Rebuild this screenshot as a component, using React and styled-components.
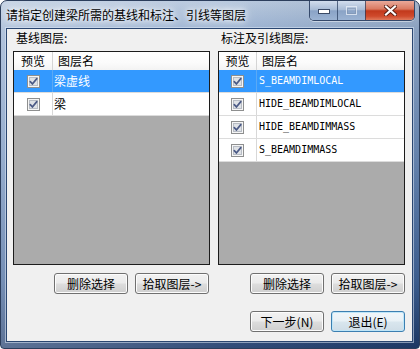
import React from "react";
import styled, { createGlobalStyle } from "styled-components";

const Global = createGlobalStyle`
  html, body { margin: 0; padding: 0; background: #fff; }
  body { font-family: "Noto Sans CJK SC", "Noto Sans", sans-serif; }
`;

const CJK = `"Noto Sans CJK SC", "Noto Sans", sans-serif`;

const Window = styled.div`
  width: 420px;
  height: 349px;
  box-sizing: border-box;
  border: 1px solid #2c3e5c;
  border-radius: 7px 7px 4px 4px;
  overflow: hidden;
  display: flex;
  flex-direction: column;
  background:
    linear-gradient(90deg, rgba(255,255,255,0.28) 0%, rgba(255,255,255,0.08) 55%, rgba(0,0,0,0.08) 100%),
    linear-gradient(180deg, #b3c5dc 0%, #93acce 9%, #6d8dba 45%, #41659a 80%, #1f3c6c 100%);
`;

const TitleBar = styled.div`
  height: 28px;
  display: flex;
  align-items: flex-start;
  padding: 0 4px 0 5px;
`;

const Title = styled.div`
  flex: 1;
  padding-top: 6px;
  font: 12px/16px ${CJK};
  color: #000;
  text-shadow: 0 0 5px #fff, 0 0 9px rgba(255,255,255,0.9), 0 0 14px rgba(255,255,255,0.7);
  white-space: nowrap;
`;

const CaptionGroup = styled.div`
  display: flex;
  height: 19px;
  border: 1px solid rgba(35, 55, 90, 0.85);
  border-top: none;
  border-radius: 0 0 5px 5px;
  overflow: hidden;
  box-shadow: 0 1px 0 rgba(255,255,255,0.45), inset 0 0 0 1px rgba(255,255,255,0.35);
`;

const CaptionButton = styled.div`
  width: ${(p) => p.$w}px;
  display: flex;
  align-items: center;
  justify-content: center;
  border-left: ${(p) => (p.$first ? "none" : "1px solid rgba(35,55,90,0.7)")};
  background: ${(p) =>
    p.$close
      ? "linear-gradient(180deg, #e9a99a 0%, #d97a62 42%, #c2391c 52%, #cf4a2c 80%, #e07a5c 100%)"
      : "linear-gradient(180deg, #d2dded 0%, #a9bcd6 45%, #8aa3c6 52%, #9bb3d3 100%)"};
`;

const Client = styled.div`
  flex: 1;
  margin: 0 6px 6px 5px;
  border: 1px solid #2a4670;
  box-shadow: 0 0 0 1px rgba(220, 232, 246, 0.55);
  background: #f0f0f0;
  padding: 1px 7px 9px 6px;
  display: flex;
  flex-direction: column;
`;

const Columns = styled.div`
  display: grid;
  grid-template-columns: 197px 187px;
  column-gap: 8px;
`;

const Column = styled.div`
  display: flex;
  flex-direction: column;
`;

const GroupLabel = styled.div`
  height: 16px;
  margin: 0 0 5px 3px;
  font: 12px/16px ${CJK};
  color: #000;
`;

const ListBox = styled.div`
  height: 214px;
  box-sizing: border-box;
  border: 1px solid #1c1c1c;
  background: #ababab;
  display: flex;
  flex-direction: column;
  overflow: hidden;
`;

const HeaderRow = styled.div`
  height: 18px;
  display: flex;
  background: linear-gradient(180deg, #ffffff 0%, #fbfbfb 60%, #f3f3f3 100%);
`;

const HeaderCell = styled.div`
  width: ${(p) => (p.$w ? `${p.$w}px` : "auto")};
  flex: ${(p) => (p.$w ? "none" : "1")};
  box-sizing: border-box;
  border-right: ${(p) => (p.$w ? "1px solid #d5d5d5" : "none")};
  padding-left: ${(p) => (p.$w ? "0" : "5px")};
  text-align: ${(p) => (p.$w ? "center" : "left")};
  font: 12px/18px ${CJK};
  color: #000;
`;

const Row = styled.div`
  height: 23px;
  box-sizing: border-box;
  display: flex;
  border-bottom: 1px solid #dcdcdc;
  background: ${(p) => (p.$selected ? "#3399ff" : "#ffffff")};
  color: ${(p) => (p.$selected ? "#ffffff" : "#000000")};
`;

const CheckCell = styled.div`
  width: ${(p) => p.$w}px;
  box-sizing: border-box;
  border-right: 1px solid ${(p) => (p.$selected ? "#5aa9f5" : "#d8d8d8")};
  display: flex;
  align-items: center;
  justify-content: center;
`;

const NameCell = styled.div`
  flex: 1;
  display: flex;
  align-items: center;
  padding-left: ${(p) => (p.$mono ? "2px" : "1px")};
  font: ${(p) => (p.$mono ? `10px/22px "DejaVu Sans Mono", "Liberation Mono", monospace` : `12px/22px ${CJK}`)};
  white-space: nowrap;
`;

const ButtonRow = styled.div`
  display: flex;
  justify-content: flex-end;
  gap: 7px;
  margin-top: 8px;
  padding-right: ${(p) => p.$pr}px;
`;

const Button = styled.div`
  width: 74px;
  height: 21px;
  box-sizing: border-box;
  border: 1px solid ${(p) => (p.$default ? "#3c7fb1" : "#707070")};
  border-radius: 3px;
  box-shadow: inset 0 0 0 1px ${(p) => (p.$default ? "#bfe6f8" : "#fcfcfc")};
  background: ${(p) =>
    p.$default
      ? "linear-gradient(180deg, #f1f6f9 0%, #e9f1f6 48%, #d9e6ee 52%, #cfdde7 100%)"
      : "linear-gradient(180deg, #f2f2f2 0%, #ebebeb 48%, #dddddd 52%, #cfcfcf 100%)"};
  display: flex;
  align-items: center;
  justify-content: center;
  font: 12px/19px ${CJK};
  color: #000;
  white-space: nowrap;
`;

const BottomRow = styled.div`
  display: flex;
  justify-content: flex-end;
  gap: 7px;
  margin-top: 17px;
  padding-right: 0;
`;

function CheckBox() {
  return (
    <svg width="13" height="13" viewBox="0 0 13 13">
      <rect x="0.5" y="0.5" width="12" height="12" fill="#f6f6f6" stroke="#8e8f8f" />
      <rect x="2.5" y="2.5" width="8" height="8" fill="#dfe2e6" stroke="#b7bcc4" />
      <path d="M3.3 6.6 L5.4 9 L9.8 3.6" fill="none" stroke="#4b5a86" strokeWidth="1.7" strokeLinecap="round" strokeLinejoin="round" />
    </svg>
  );
}

function LayerList({ colW, rows, mono }) {
  return (
    <ListBox>
      <HeaderRow>
        <HeaderCell $w={colW}>预览</HeaderCell>
        <HeaderCell>图层名</HeaderCell>
      </HeaderRow>
      {rows.map((r, i) => (
        <Row key={r} $selected={i === 0}>
          <CheckCell $w={colW} $selected={i === 0}>
            <CheckBox />
          </CheckCell>
          <NameCell $mono={mono}>{r}</NameCell>
        </Row>
      ))}
    </ListBox>
  );
}

export default function App() {
  return (
    <>
      <Global />
      <Window>
        <TitleBar>
          <Title>请指定创建梁所需的基线和标注、引线等图层</Title>
          <CaptionGroup>
            <CaptionButton $w={27} $first>
              <svg width="12" height="6" viewBox="0 0 12 6">
                <rect x="0.5" y="1.5" width="11" height="4" fill="#fff" stroke="#3a4a66" />
              </svg>
            </CaptionButton>
            <CaptionButton $w={27}>
              <svg width="11" height="9" viewBox="0 0 11 9">
                <rect x="0.5" y="0.5" width="10" height="8" fill="none" stroke="rgba(235,240,248,0.75)" />
                <rect x="1.5" y="2.5" width="8" height="5" fill="none" stroke="rgba(120,140,170,0.5)" />
              </svg>
            </CaptionButton>
            <CaptionButton $w={48} $close>
              <svg width="13" height="11" viewBox="0 0 13 11">
                <path d="M2 1.5 L11 9.5 M11 1.5 L2 9.5" stroke="#5a1f14" strokeWidth="4" strokeLinecap="square" />
                <path d="M2 1.5 L11 9.5 M11 1.5 L2 9.5" stroke="#ffffff" strokeWidth="2.2" strokeLinecap="square" />
              </svg>
            </CaptionButton>
          </CaptionGroup>
        </TitleBar>
        <Client>
          <Columns>
            <Column>
              <GroupLabel>基线图层:</GroupLabel>
              <LayerList colW={39} rows={["梁虚线", "梁"]} />
              <ButtonRow $pr={1}>
                <Button>删除选择</Button>
                <Button>拾取图层-&gt;</Button>
              </ButtonRow>
            </Column>
            <Column>
              <GroupLabel>标注及引线图层:</GroupLabel>
              <LayerList
                colW={38}
                mono
                rows={["S_BEAMDIMLOCAL", "HIDE_BEAMDIMLOCAL", "HIDE_BEAMDIMMASS", "S_BEAMDIMMASS"]}
              />
              <ButtonRow $pr={0}>
                <Button>删除选择</Button>
                <Button>拾取图层-&gt;</Button>
              </ButtonRow>
            </Column>
          </Columns>
          <BottomRow>
            <Button>下一步(N)</Button>
            <Button $default>退出(E)</Button>
          </BottomRow>
        </Client>
      </Window>
    </>
  );
}
